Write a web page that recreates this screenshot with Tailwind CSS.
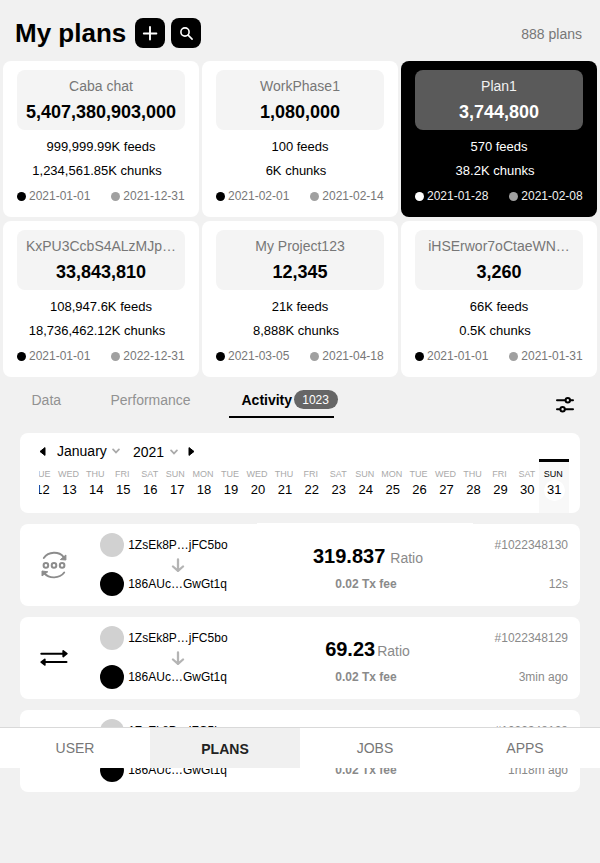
<!DOCTYPE html>
<html lang="en">
<head>
<meta charset="utf-8">
<title>My plans</title>
<script src="https://cdn.jsdelivr.net/npm/@tailwindcss/browser@4"></script>
</head>
<body class="relative h-[863px] w-[600px] overflow-hidden bg-[#f1f1f1] font-['Liberation_Sans',Arial,sans-serif] text-black">
<header class="flex h-[61px] items-start pt-[18px] pr-[18px] pl-[15px]">
  <h1 class="w-[120px] text-[26px] leading-[30px] font-bold">My plans</h1>
  <button class="flex size-[30px] items-center justify-center rounded-[8px] bg-black" aria-label="Add">
    <svg class="size-[30px]" viewBox="0 0 30 30" fill="none" stroke="white" stroke-width="1.9" stroke-linecap="round"><path d="M15 9v12.500M8.800 15.500h12.600"/></svg>
  </button>
  <button class="ml-[6px] flex size-[30px] items-center justify-center rounded-[8px] bg-black" aria-label="Search">
    <svg class="size-[30px]" viewBox="0 0 30 30" fill="none" stroke="white" stroke-width="1.6" stroke-linecap="round"><circle cx="14" cy="14" r="4.100"/><path d="M17.100 17.100l4 4"/></svg>
  </button>
  <span class="ml-auto pt-[6px] text-sm text-[#777]">888 plans</span>
</header>

<section id="plans" class="grid grid-cols-3 gap-x-[3px] gap-y-[4px] px-[3px]"></section>

<nav class="flex h-[56px] items-start pl-[31px] text-sm text-[#929292]">
  <span class="mt-[13px] w-[79px] pl-[0.500px]">Data</span>
  <span class="mt-[13px] w-[119px] pl-[0.500px]">Performance</span>
  <div class="flex h-[40.5px] w-[105px] items-start border-b-2 border-black pl-[12.500px] text-black">
    <span class="mt-[13px] font-bold">Activity</span>
    <span class="mt-[13px] ml-[2px] h-[19px] w-[44px] shrink-0 rounded-full bg-[#666] pr-[1px] text-center text-xs leading-[20px] text-white">1023</span>
  </div>
  <svg class="mt-[19px] ml-[222px] h-[17px] w-[18px]" viewBox="0 0 18 17" fill="#f1f1f1" stroke="black" stroke-width="2" stroke-linecap="round"><path d="M1 4.200h16M1 13.200h16"/><circle cx="11.800" cy="4.200" r="2.200"/><circle cx="6.600" cy="13.200" r="2.200"/></svg>
</nav>

<section class="mx-[20px] h-[80px] overflow-hidden rounded-[8px] bg-white pr-[11px] pl-[19px]">
  <div class="flex h-[26px] items-center pt-[11px] text-sm">
    <svg class="h-[9px] w-[7px]" viewBox="0 0 7 9"><path d="M6 .6v7.800L1 4.500z" stroke="black" stroke-width="1" stroke-linejoin="round"/></svg>
    <span class="-mt-[2px] ml-[11px] w-[55px]">January</span>
    <svg class="-mt-[1px] h-[6px] w-[8px]" viewBox="0 0 8 6" fill="none" stroke="#aaa" stroke-width="1.800" stroke-linecap="round"><path d="M1.100 1.400 4 4.500l2.900-3.100"/></svg>
    <span class="ml-[13px] w-[37px]">2021</span>
    <svg class="h-[6px] w-[8px]" viewBox="0 0 8 6" fill="none" stroke="#aaa" stroke-width="1.800" stroke-linecap="round"><path d="M1.100 1.400 4 4.500l2.900-3.100"/></svg>
    <svg class="ml-[10px] h-[9px] w-[7px]" viewBox="0 0 7 9"><path d="M1 .6v7.800L6 4.500z" stroke="black" stroke-width="1" stroke-linejoin="round"/></svg>
  </div>
  <div class="h-[54px] w-[530px] overflow-hidden"><div id="days" class="-ml-[10px] flex w-[550px]"></div></div>
</section>

<main id="feed" class="mx-[20px] mt-[11px] flex flex-col gap-[11px]"></main>

<footer class="absolute top-[727px] left-0 grid h-[41px] w-full grid-cols-4 border-t border-[#d9d9d9] bg-white text-center text-sm leading-[40px] text-[#777]">
  <span>USER</span>
  <span class="h-[40px] bg-[#f0f0f0] leading-[42px] font-bold text-[#222]">PLANS</span>
  <span>JOBS</span>
  <span>APPS</span>
</footer>

<script>
const plans = [
  ['Caba chat','5,407,380,903,000','999,999.99K','1,234,561.85K','2021-01-01','2021-12-31'],
  ['WorkPhase1','1,080,000','100','6K','2021-02-01','2021-02-14'],
  ['Plan1','3,744,800','570','38.2K','2021-01-28','2021-02-08',true],
  ['KxPU3CcbS4ALzMJp…','33,843,810','108,947.6K','18,736,462.12K','2021-01-01','2022-12-31'],
  ['My Project123','12,345','21k','8,888K','2021-03-05','2021-04-18'],
  ['iHSErwor7oCtaeWN…','3,260','66K','0.5K','2021-01-01','2021-01-31'],
];
document.getElementById('plans').innerHTML = plans.map(([name,total,feeds,chunks,from,to,on]) => `
<article class="h-[156px] rounded-[8px] px-[14px] pt-[9px] text-center text-[13px] ${on ? 'bg-black text-white' : 'bg-white'}">
  <div class="h-[60px] rounded-[8px] pt-[6px] ${on ? 'bg-[#5a5a5a]' : 'bg-[#f4f4f4]'}">
    <div class="text-sm leading-[20px] ${on ? 'text-[#f1f1f1]' : 'text-[#777]'}">${name}</div>
    <div class="mt-[4px] text-lg leading-[24px] font-bold">${total}</div>
  </div>
  <p class="mt-[5px] leading-[24px]">${feeds} feeds</p>
  <p class="pr-[8px] leading-[24px]">${chunks} chunks</p>
  <div class="mt-[5px] flex items-center justify-between pr-[0.300px] text-xs leading-[16px] ${on ? 'text-[#f1f1f1]' : 'text-[#777]'}">
    <span class="flex items-center gap-[3px]"><i class="mt-[1px] size-[9px] rounded-full ${on ? 'bg-white' : 'bg-black'}"></i>${from}</span>
    <span class="flex items-center gap-[3px]"><i class="mt-[1px] size-[9px] rounded-full bg-[#a0a0a0]"></i>${to}</span>
  </div>
</article>`).join('');

const names = ['SUN','MON','TUE','WED','THU','FRI','SAT'];
let days = '';
for (let d = 12; d <= 31; d++) {
  const on = d === 31;
  const name = names[(d + 4) % 7];
  const nudge = d === 17 ? 'mr-[4px]' : name === 'SAT' ? 'mr-[1px]' : 'mr-[2px]';
  days += `<div class="flex h-[54px] shrink-0 flex-col items-center ${on ? '-ml-[1.500px] w-[30px] border-t-3 border-black bg-[#f8f8f8] pt-[6px]' : 'w-[26.950px] pt-[9px]'}">
    <span class="${nudge} text-[9px] leading-[12px] ${on ? 'text-black' : 'text-[#aaa]'}">${name}</span>
    <span class="flex size-[21px] items-center justify-center rounded-full pb-[2px] text-[13px] ${on ? 'bg-white' : ''}">${d}</span>
  </div>`;
}
document.getElementById('days').innerHTML = days;

const cycle = `<svg class="h-[28px] w-[26px]" viewBox="0 0 26 28" fill="none" stroke="#8c8c8c" stroke-width="1.900"><path d="M2.800 7C7.500.2 18 .2 22.500 5.800M23.200 21.500C18.500 27.800 8 27.800 3.500 22.300" stroke-linecap="round"/><g stroke-width="2"><circle cx="4.900" cy="14.400" r="2.300"/><circle cx="13" cy="14.400" r="2.300"/><circle cx="21.100" cy="14.400" r="2.300"/></g><path d="M24.900 4v5l-5.500-.4zM1 24.900V20l5.800.8z" fill="#8c8c8c" stroke-width="1" stroke-linejoin="round"/></svg>`;
const swap = `<svg class="h-[16px] w-[28px]" viewBox="0 0 28 16" fill="none" stroke="black" stroke-width="2" stroke-linecap="round"><path d="M1.300 3.700h22M5 12.100h21.500"/><path d="M23.200.9 26.800 3.700l-3.600 2.800zM4.800 9.300 1.200 12.100l3.600 2.800z" fill="black" stroke-width="1.700" stroke-linejoin="round"/></svg>`;
const tx = [
  ['319.837','#1022348130','12s',cycle,'gap-[5px] pl-[4px]'],
  ['69.23','#1022348129','3min ago',swap,'gap-[2px] pl-[3px]'],
  ['69.23','#1022348128','1h18m ago',swap,'gap-[2px] pl-[3px]'],
];
document.getElementById('feed').innerHTML = tx.map(([amt,id,age,icon,gap],i) => `
<article class="relative flex h-[82px] rounded-[8px] bg-white text-xs">
  ${i === 0 ? '<i class="absolute -top-[1px] left-[237px] h-[1px] w-[216px] bg-white"></i>' : ''}
  <div class="flex w-[80px] items-center ${i === 0 ? 'pl-[20.500px]' : 'pl-[19.500px]'}">${icon}</div>
  <div class="w-[140px] pt-[9px]">
    <div class="flex h-[24px] items-center gap-[4.200px]"><i class="size-[24px] rounded-full bg-[#d1d1d1]"></i>1ZsEk8P…jFC5bo</div>
    <svg class="mt-[1px] ml-[71px] h-[14px] w-[14px]" viewBox="0 0 14 14" fill="none" stroke="#b4b4b4" stroke-width="2.300" stroke-linecap="round" stroke-linejoin="round"><path d="M7 1.500V13M2 8.500l5 4.300 5-4.300"/></svg>
    <div class="flex h-[24px] items-center gap-[4.200px]"><i class="size-[24px] rounded-full bg-black"></i>186AUc…GwGt1q</div>
  </div>
  <div class="w-[252px] pt-[20px] text-center text-[#8a8a8a]">
    <div class="flex h-[24px] items-baseline justify-center leading-[24px] ${gap}"><b class="text-xl leading-[24px] text-black">${amt}</b><span class="text-sm leading-[24px]">Ratio</span></div>
    <div class="mt-[8px] leading-[16px] font-bold text-[#8a8a8a]">0.02 Tx fee</div>
  </div>
  <div class="flex grow flex-col items-end pt-[13px] pr-[12px] leading-[16px] text-[#8a8a8a]"><span>${id}</span><span class="mt-[23px]">${age}</span></div>
</article>`).join('');
</script>
</body>
</html>
